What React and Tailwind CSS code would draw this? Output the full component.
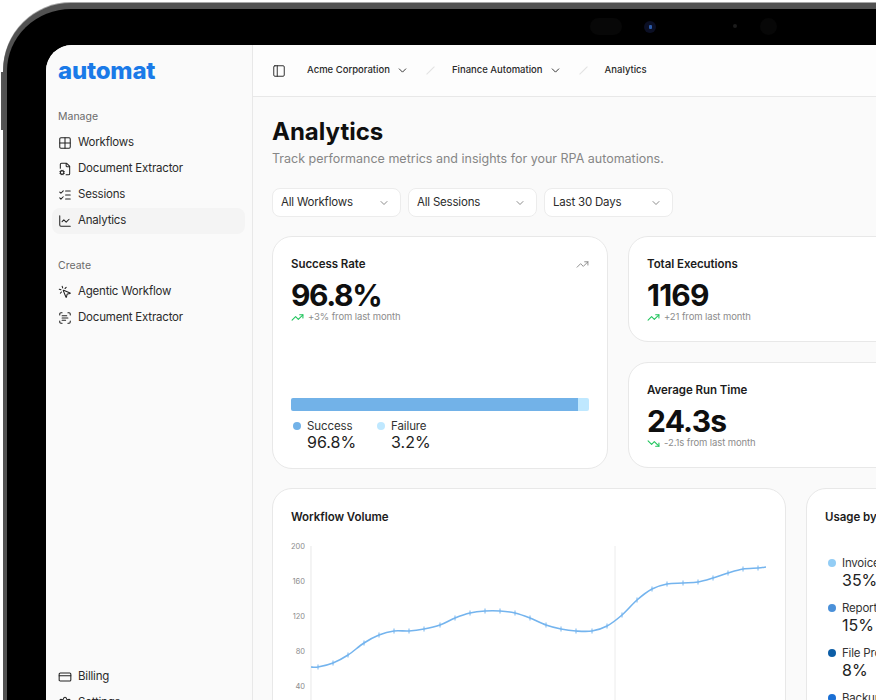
import {
  Grid2x2,
  FileCog,
  ListChecks,
  ChartLine,
  MousePointerClick,
  ScanText,
  CreditCard,
  Settings,
  PanelLeft,
  ChevronDown,
  TrendingUp,
  TrendingDown,
} from 'lucide-react';

const manageItems = [
  { label: 'Workflows', icon: Grid2x2 },
  { label: 'Document Extractor', icon: FileCog },
  { label: 'Sessions', icon: ListChecks },
  { label: 'Analytics', icon: ChartLine, active: true },
];

const createItems = [
  { label: 'Agentic Workflow', icon: MousePointerClick },
  { label: 'Document Extractor', icon: ScanText },
];

const usage = [
  { label: 'Invoice Processing', value: '35%', dot: 'bg-[#93cdf5]' },
  { label: 'Report Generation', value: '15%', dot: 'bg-[#4a90d9]' },
  { label: 'File Processing', value: '8%', dot: 'bg-[#0d5ea6]' },
  { label: 'Backup Automation', value: '12%', dot: 'bg-[#1a6fd4]' },
];

// chart points in svg coordinates (svg sits at page x 273, y 540)
const points = [
  [311, 667], [318, 667], [333, 663], [348, 655], [364, 643], [379, 635], [394, 631], [409, 631],
  [424, 629], [440, 625], [455, 618], [470, 613], [485, 611], [500, 611], [515, 613], [530, 618],
  [546, 625], [561, 629], [576, 631], [592, 631], [607, 626], [622, 615], [637, 600], [652, 589],
  [667, 584], [683, 583], [698, 582], [713, 578], [728, 573], [743, 569], [758, 568], [766, 567],
].map(([x, y]) => [x - 273, y - 540]);

function smoothPath(pts) {
  let d = `M${pts[0][0]} ${pts[0][1]}`;
  for (let i = 0; i < pts.length - 1; i++) {
    const p0 = pts[i - 1] || pts[i];
    const p1 = pts[i];
    const p2 = pts[i + 1];
    const p3 = pts[i + 2] || p2;
    const c1x = p1[0] + (p2[0] - p0[0]) / 6;
    const c1y = p1[1] + (p2[1] - p0[1]) / 6;
    const c2x = p2[0] - (p3[0] - p1[0]) / 6;
    const c2y = p2[1] - (p3[1] - p1[1]) / 6;
    d += ` C${c1x} ${c1y} ${c2x} ${c2y} ${p2[0]} ${p2[1]}`;
  }
  return d;
}

function NavItem({ label, icon: Icon, active }) {
  return (
    <div className={`flex h-[26px] items-center gap-[6px] rounded-lg px-[6px] text-[11.5px] tracking-[-0.2px] text-[#2b2b2b] ${active ? 'bg-[#f4f4f4]' : ''}`}>
      <Icon size={14} strokeWidth={1.8} className="text-[#222] shrink-0" />
      <span>{label}</span>
    </div>
  );
}

function Delta({ text, down }) {
  const Icon = down ? TrendingDown : TrendingUp;
  return (
    <div className="flex items-center gap-[4px] text-[9.5px] leading-[14px] tracking-[-0.1px] text-[#8c8c8c]">
      <Icon size={13} strokeWidth={2} className="text-[#22c55e]" />
      <span>{text}</span>
    </div>
  );
}

function StatCard({ title, value, delta, down }) {
  return (
    <div className="h-[106px] w-[336px] rounded-[20px] border border-[#e8e8e8] bg-white pl-[18px] pt-[20px]">
      <div className="text-[11.5px] font-semibold leading-[14px] tracking-[-0.05px] text-[#1c1c1c]">{title}</div>
      <div className="mt-[9px] text-[30px] font-bold leading-[30px] tracking-[-0.8px] text-[#0f0f0f]">{value}</div>
      <Delta text={delta} down={down} />
    </div>
  );
}

function Select({ label }) {
  return (
    <div className="flex h-[29px] w-[129px] items-center justify-between rounded-lg border border-[#ececec] bg-white pl-[8px] pr-[10px] text-[11.5px] tracking-[-0.2px] text-[#2b2b2b]">
      <span>{label}</span>
      <ChevronDown size={12} strokeWidth={1.5} className="text-[#666]" />
    </div>
  );
}

function Crumb({ label }) {
  return (
    <div className="flex items-center">
      <span className="text-[9.5px] font-medium text-[#2b2b2b]">{label}</span>
      <ChevronDown size={13} strokeWidth={1.8} className="ml-[6px] text-[#333]" />
    </div>
  );
}

function Slash() {
  return <span className="mx-[21px] h-[11px] w-px rotate-45 bg-[#e2e2e2]" />;
}

export default function App() {
  return (
    <div className="relative h-[700px] w-[876px] overflow-hidden bg-white font-['Inter',sans-serif]">
      {/* hardware buttons */}
      <div className="absolute left-[98px] top-[2px] h-[2px] w-[49px] bg-[#777]" />
      <div className="absolute left-[157px] top-[2px] h-[2px] w-[49px] bg-[#777]" />
      <div className="absolute left-[1px] top-[72px] h-[58px] w-[3px] bg-[#555]" />

      <div className="relative ml-[3px] mt-[3px] h-[720px] rounded-tl-[68px] border-l-[4px] border-t-[6px] border-[#525252] bg-black pl-[39px] pt-[36px] shadow-[0_-1px_0_#a8a8a8]">
        {/* camera cutouts */}
        <div className="absolute left-[583px] top-[9px] h-[17px] w-[32px] rounded-full bg-[#070707]" />
        <div className="absolute left-[637px] top-[12px] flex h-[12px] w-[12px] items-center justify-center rounded-full bg-[#0b0f24]">
          <div className="h-[4px] w-[3px] rounded-[1px] bg-[#2b5aa8]" />
        </div>
        <div className="absolute left-[726px] top-[15px] h-[4px] w-[4px] rounded-full bg-[#1c1c1c]" />
        <div className="absolute left-[753px] top-[9px] h-[17px] w-[17px] rounded-full bg-[#070707]" />

        <div className="flex h-[671px] overflow-hidden rounded-tl-[26px] bg-[#fafafa]">
          <aside className="flex w-[207px] shrink-0 flex-col border-r border-[#e8e8e8] bg-[#fafafa] pl-[6px] pr-[7px]">
            <div className="pl-[6px] pt-[11px] text-[24px] font-extrabold leading-[30px] tracking-[-0.2px] text-[#1a7ae8]">automat</div>
            <div className="mt-[24px] pl-[6px] text-[10.5px] leading-[14px] text-[#6b6b6b]">Manage</div>
            <div className="mt-[6px] flex flex-col">
              {manageItems.map((item) => (
                <NavItem key={item.label} {...item} />
              ))}
            </div>
            <div className="mt-[25px] pl-[6px] text-[10.5px] leading-[14px] text-[#6b6b6b]">Create</div>
            <div className="mt-[6px] flex flex-col">
              {createItems.map((item) => (
                <NavItem key={item.label} {...item} />
              ))}
            </div>
            <div className="mt-auto flex flex-col">
              <NavItem label="Billing" icon={CreditCard} />
              <NavItem label="Settings" icon={Settings} />
            </div>
          </aside>

          <main className="min-w-0 flex-1 overflow-hidden">
            <header className="flex h-[52px] items-center border-b border-[#e8e8e8] bg-[#fdfdfd] pl-[19px]">
              <PanelLeft size={14} strokeWidth={1.6} className="text-[#222]" />
              <div className="ml-[21px] flex items-center">
                <Crumb label="Acme Corporation" />
                <Slash />
                <Crumb label="Finance Automation" />
                <Slash />
                <span className="text-[9.5px] font-medium text-[#2b2b2b]">Analytics</span>
              </div>
            </header>

            <div className="w-[700px] pl-[19px] pt-[20px]">
              <h1 className="text-[24px] font-bold leading-[30px] text-[#0f0f0f]">Analytics</h1>
              <p className="mt-[3px] text-[12.5px] leading-[18px] text-[#868686]">Track performance metrics and insights for your RPA automations.</p>

              <div className="mt-[20px] flex gap-[7px]">
                <Select label="All Workflows" />
                <Select label="All Sessions" />
                <Select label="Last 30 Days" />
              </div>

              <div className="mt-[19px] flex gap-[20px]">
                <div className="h-[233px] w-[336px] shrink-0 rounded-[20px] border border-[#e8e8e8] bg-white px-[18px] pt-[20px]">
                  <div className="flex items-center justify-between">
                    <div className="text-[11.5px] font-semibold leading-[14px] tracking-[-0.05px] text-[#1c1c1c]">Success Rate</div>
                    <TrendingUp size={13} strokeWidth={1.5} className="text-[#777]" />
                  </div>
                  <div className="mt-[9px] text-[30px] font-bold leading-[30px] tracking-[-1.4px] text-[#0f0f0f]">96.8%</div>
                  <Delta text="+3% from last month" />
                  <div className="mt-[74px] flex h-[13px] overflow-hidden rounded-[2px]">
                    <div className="w-[96.3%] bg-[#72b2e8]" />
                    <div className="flex-1 bg-[#bfe8ff]" />
                  </div>
                  <div className="mt-[8px] flex">
                    <div className="w-[84px] pl-[2px]">
                      <div className="flex items-center gap-[6px] text-[11.5px] leading-[14px] tracking-[-0.1px] text-[#333]">
                        <span className="h-[8px] w-[8px] rounded-full bg-[#72b2e8]" />
                        Success
                      </div>
                      <div className="ml-[14px] text-[16px] leading-[18px] text-[#222]">96.8%</div>
                    </div>
                    <div className="pl-[2px]">
                      <div className="flex items-center gap-[6px] text-[11.5px] leading-[14px] tracking-[-0.1px] text-[#333]">
                        <span className="h-[8px] w-[8px] rounded-full bg-[#bfe8ff]" />
                        Failure
                      </div>
                      <div className="ml-[14px] text-[16px] leading-[18px] text-[#222]">3.2%</div>
                    </div>
                  </div>
                </div>

                <div className="flex shrink-0 flex-col gap-[20px]">
                  <StatCard title="Total Executions" value="1169" delta="+21 from last month" />
                  <StatCard title="Average Run Time" value="24.3s" delta="-2.1s from last month" down />
                </div>
              </div>

              <div className="mt-[19px] flex gap-[20px]">
                <div className="h-[260px] w-[514px] shrink-0 rounded-[20px] border border-[#e8e8e8] bg-white pt-[21px]">
                  <div className="pl-[18px] text-[11.5px] font-semibold leading-[14px] tracking-[-0.05px] text-[#1c1c1c]">Workflow Volume</div>
                  <svg width="512" height="200" viewBox="0 0 512 200" className="mt-[16px] block">
                    <line x1="38" y1="6" x2="38" y2="200" stroke="#ececec" strokeWidth="1.2" />
                    <line x1="342" y1="6" x2="342" y2="200" stroke="#ececec" strokeWidth="1" />
                    {[[200, 9], [160, 44], [120, 79], [80, 114], [40, 149]].map(([label, y]) => (
                      <text key={label} x="32" y={y} textAnchor="end" fontSize="7.5" fill="#8c8c8c">{label}</text>
                    ))}
                    <path d={smoothPath(points)} fill="none" stroke="#74b4ee" strokeWidth="1.6" />
                    {points.slice(1, -1).map(([x, y]) => (
                      <line key={x} x1={x} y1={y - 2.5} x2={x} y2={y + 2.5} stroke="#74b4ee" strokeWidth="1" />
                    ))}
                  </svg>
                </div>

                <div className="h-[260px] w-[300px] shrink-0 rounded-[20px] border border-[#e8e8e8] bg-white pl-[18px] pt-[21px]">
                  <div className="whitespace-nowrap text-[11.5px] font-semibold leading-[14px] tracking-[-0.05px] text-[#1c1c1c]">Usage by Workflow</div>
                  <div className="mt-[31px] flex flex-col gap-[11px] pl-[3px]">
                    {usage.map((item) => (
                      <div key={item.label}>
                        <div className="flex items-center gap-[6px] whitespace-nowrap text-[11.5px] leading-[16px] tracking-[-0.2px] text-[#333]">
                          <span className={`h-[8px] w-[8px] rounded-full ${item.dot}`} />
                          {item.label}
                        </div>
                        <div className="ml-[14px] text-[16px] leading-[18px] text-[#222]">{item.value}</div>
                      </div>
                    ))}
                  </div>
                </div>
              </div>
            </div>
          </main>
        </div>
      </div>
    </div>
  );
}
